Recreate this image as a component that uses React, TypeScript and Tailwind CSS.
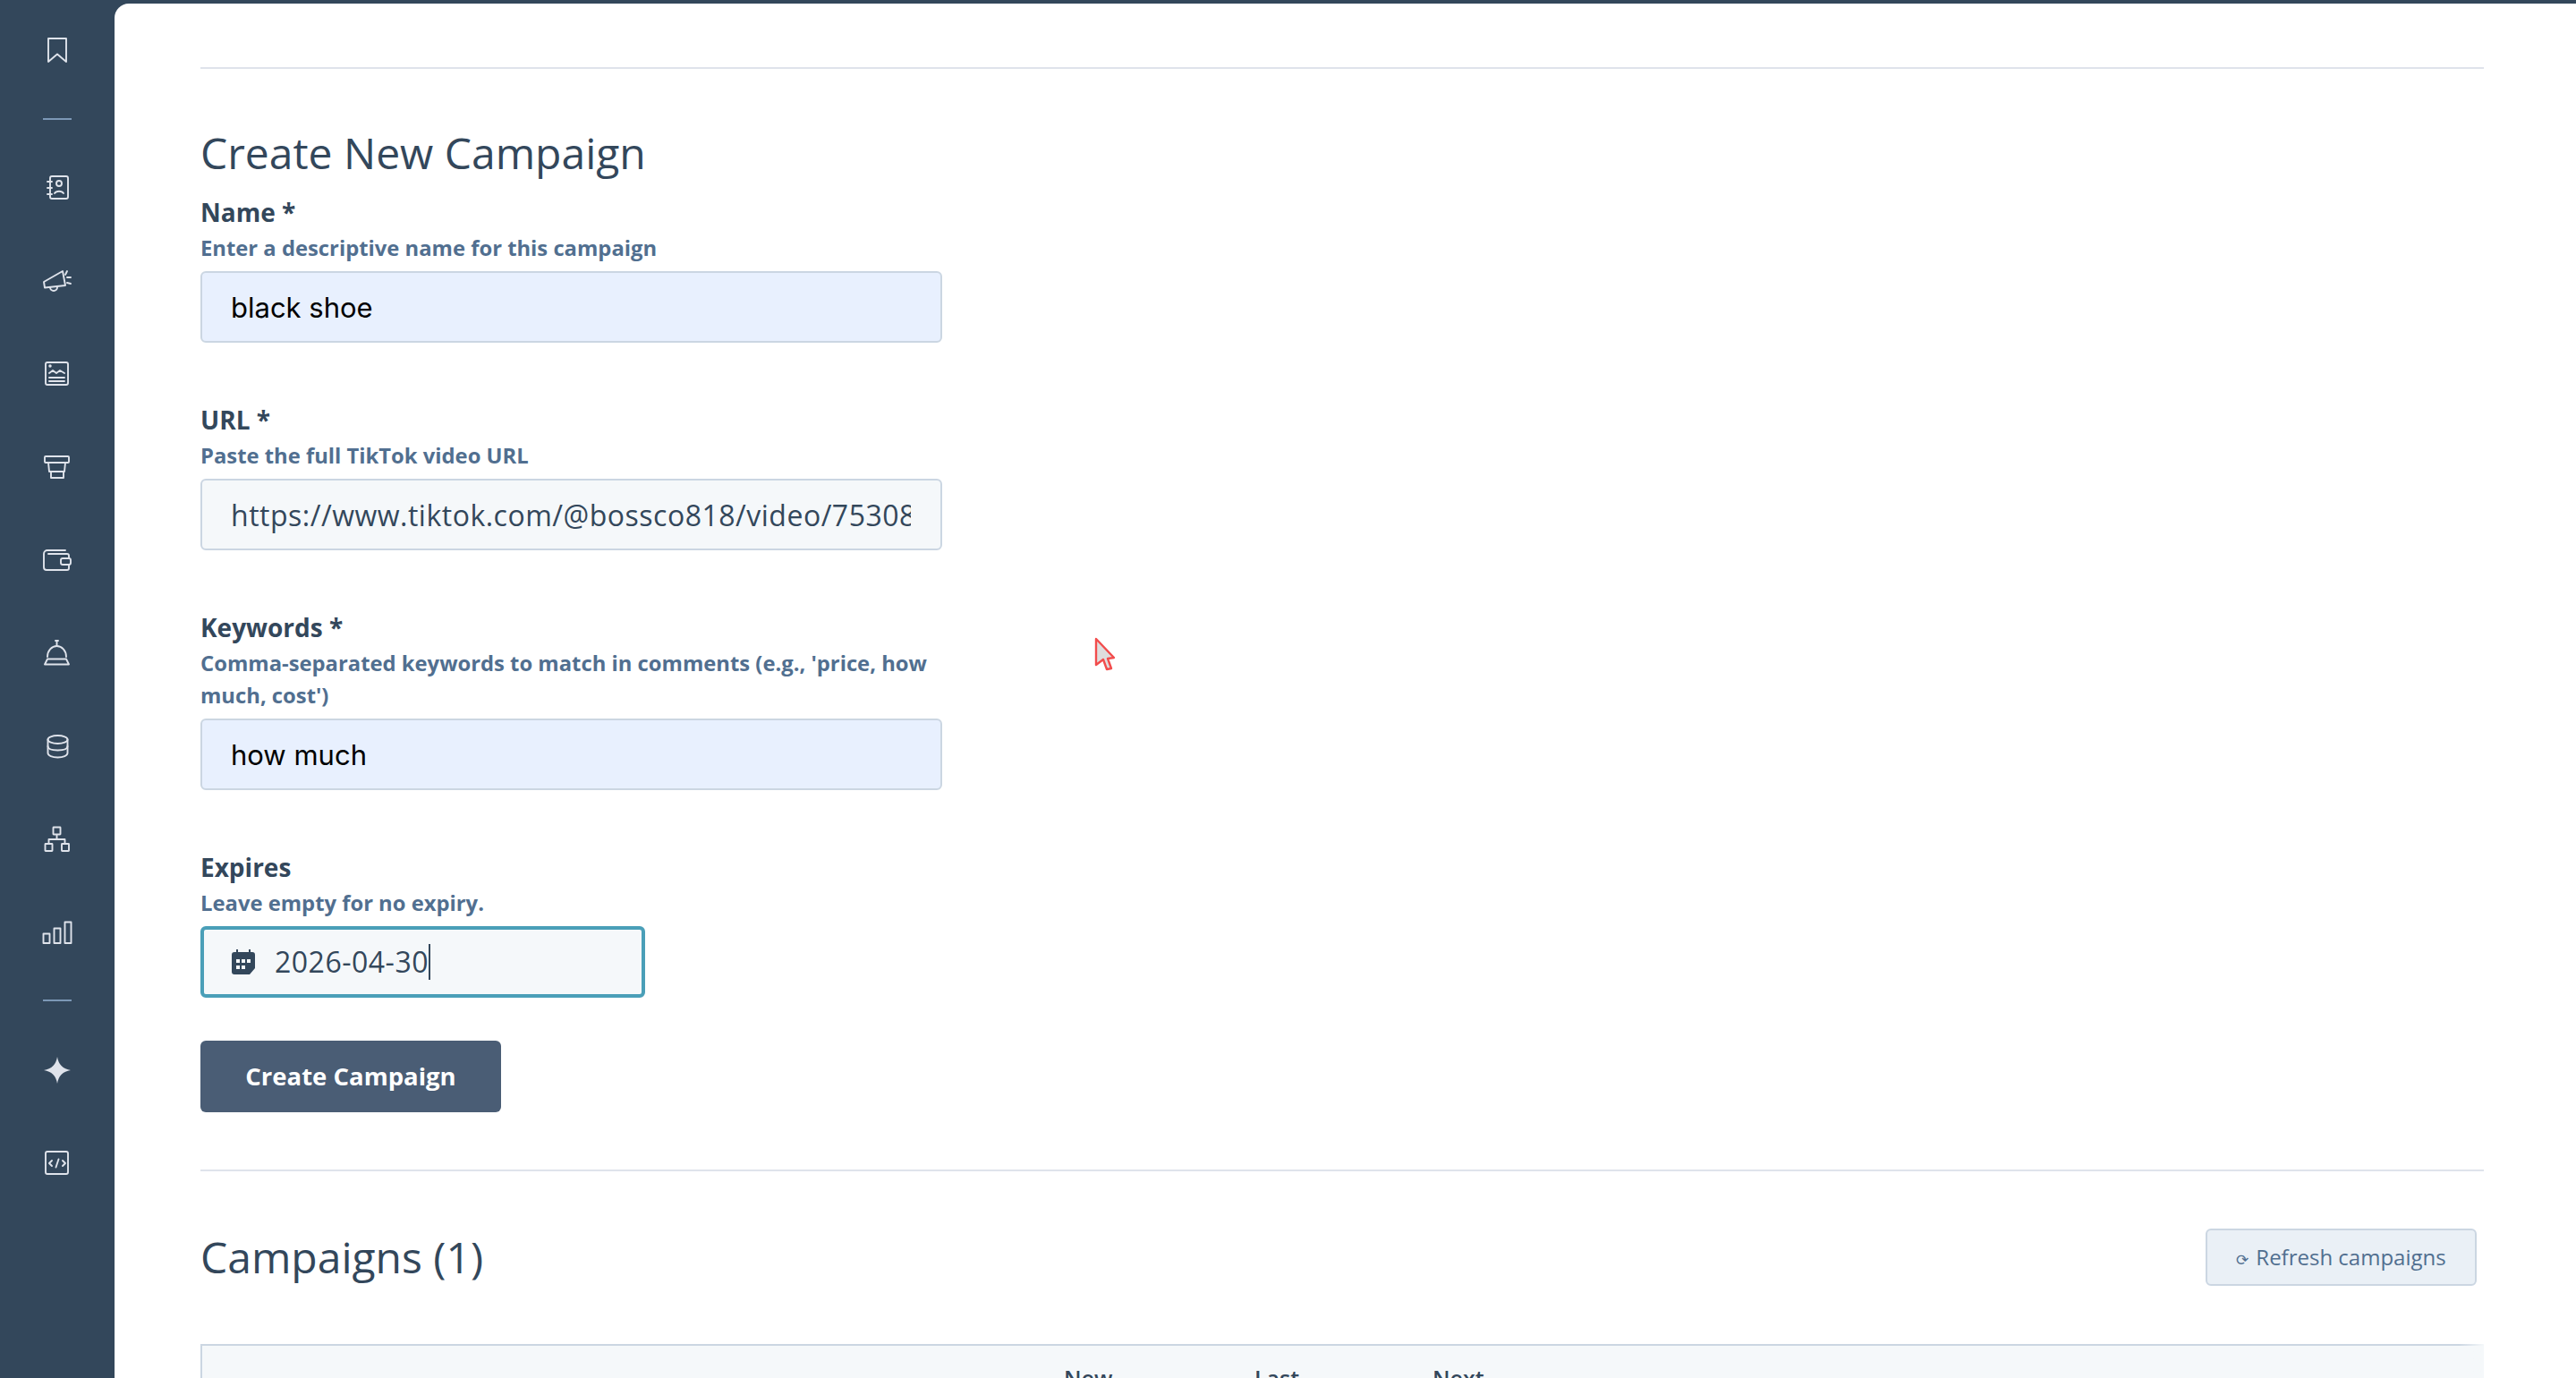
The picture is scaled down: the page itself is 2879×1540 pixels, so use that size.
import React from 'react';

const NavIcon: React.FC<{ children: React.ReactNode }> = ({ children }) => (
  <div className="h-[104px] w-full flex items-center justify-center shrink-0">
    <svg
      width="36"
      height="36"
      viewBox="0 0 36 36"
      fill="none"
      stroke="#dfe3eb"
      strokeWidth="1.9"
      strokeLinecap="round"
      strokeLinejoin="round"
    >
      {children}
    </svg>
  </div>
);

const NavDivider: React.FC<{ tall?: boolean }> = ({ tall }) => (
  <div className={tall ? 'h-[50px] w-full flex items-center justify-center shrink-0' : 'h-[49px] w-full flex items-center justify-center shrink-0'}>
    <div className="w-8 h-[2px] bg-[#7c98b6]"></div>
  </div>
);

const Sidebar: React.FC = () => (
  <aside className="w-[128px] shrink-0 flex flex-col bg-[#33475b]">
    <NavIcon>
      <path d="M8 5h20v26l-10-8.500L8 31z" />
    </NavIcon>
    <NavDivider />
    <NavIcon>
      <rect x="10" y="6" width="20" height="25" rx="2" />
      <path d="M7 12h5M7 19h5M7 26h5" />
      <circle cx="20" cy="14" r="3" />
      <path d="M15 25c2-3 8-3 10 0" />
    </NavIcon>
    <NavIcon>
      <path d="M3 20L24 8l3 16-23 2.500z" />
      <path d="M10 26a4 4 0 0 0 8 0" />
      <path d="M29 8l-2 4M29 15h4M29 21l4 1" />
    </NavIcon>
    <NavIcon>
      <rect x="5" y="6" width="25" height="25" rx="2" />
      <circle cx="10" cy="10" r="0.8" />
      <path d="M9 18l4-3 4 3 4-3 5 3" />
      <path d="M9 23h17M9 27h17" />
    </NavIcon>
    <NavIcon>
      <rect x="4" y="7" width="27" height="7" rx="1" />
      <path d="M8 14l1 10h17l1-10" />
      <path d="M11 24v7h14v-7" />
    </NavIcon>
    <NavIcon>
      <path d="M27 8H7a4 4 0 0 0-4 4v15a3 3 0 0 0 3 3h23a2 2 0 0 0 2-2v-4" />
      <path d="M31 17v-3a2 2 0 0 0-2-2H8" />
      <rect x="22" y="17" width="11" height="7" rx="2" />
    </NavIcon>
    <NavIcon>
      <path d="M16 5h3M17.500 5v5" />
      <path d="M7 23c0-7 5-12 10.500-12S28 16 28 23" />
      <path d="M7 25.500h21l3 6H4z" />
    </NavIcon>
    <NavIcon>
      <ellipse cx="18.500" cy="11.500" rx="11" ry="4.500" />
      <path d="M7.500 11.500v15c0 3 5 5 11 5s11-2 11-5v-15" />
      <path d="M7.500 19c0 3 5 4.500 11 4.500s11-1.500 11-4.500" />
    </NavIcon>
    <NavIcon>
      <rect x="13.500" y="5.500" width="8" height="8" rx="0.500" />
      <rect x="4.500" y="24" width="8" height="8" rx="0.500" />
      <rect x="23" y="24" width="8" height="8" rx="0.500" />
      <path d="M17.500 14v5M8.500 24v-5h18v5" />
    </NavIcon>
    <NavIcon>
      <rect x="2.500" y="20.500" width="7" height="10.500" />
      <rect x="14.500" y="14.500" width="7" height="16.500" />
      <rect x="26.500" y="7.500" width="7" height="23.500" />
    </NavIcon>
    <NavDivider tall />
    <NavIcon>
      <path d="M18 4Q20 17 33 19 20 21 18 34 16 21 3 19 16 17 18 4z" fill="#dfe3eb" stroke="none" />
    </NavIcon>
    <NavIcon>
      <rect x="5" y="6" width="25" height="25" rx="2" />
      <path d="M12 16l-3 3 3 3M24 16l3 3-3 3M19.500 14.500l-3 9" />
    </NavIcon>
  </aside>
);

const FieldLabel: React.FC<{ label: string; hint: string }> = ({ label, hint }) => (
  <>
    <div className="text-[28px] leading-[36px] font-bold text-[#33475b]">{label}</div>
    <div className="mt-1 mb-2 text-[23.800px] leading-[36px] font-bold text-[#516f90]">{hint}</div>
  </>
);

const TextField: React.FC<{ value: string; autofilled?: boolean }> = ({ value, autofilled }) => (
  <input
    readOnly
    value={value}
    className={
      autofilled
        ? "block w-[829px] h-[80px] px-[32px] rounded-[6px] border-2 border-[#cbd6e2] bg-[#e8f0fe] font-['Inter',sans-serif] text-[31px] text-black outline-none"
        : 'block w-[829px] h-[80px] pl-[32px] pr-[33px] rounded-[6px] border-2 border-[#cbd6e2] bg-[#f5f8fa] text-[32px] tracking-[0.5px] text-[#33475b] outline-none'
    }
  />
);

const CalendarIcon: React.FC = () => (
  <svg width="26" height="28" viewBox="0 0 26 28" className="shrink-0">
    <path
      d="M5 0h2v3h12V0h2v3h2a3 3 0 0 1 3 3v15l-6 7H3a3 3 0 0 1-3-3V6a3 3 0 0 1 3-3h2z"
      fill="#33475b"
    />
    <g fill="#f5f8fa">
      <rect x="5" y="11" width="4" height="4" />
      <rect x="11" y="11" width="4" height="4" />
      <rect x="17" y="11" width="4" height="4" />
      <rect x="5" y="18" width="4" height="4" />
      <rect x="11" y="18" width="4" height="4" />
    </g>
  </svg>
);

const App: React.FC = () => {
  return (
    <div className="relative flex h-[1540px] w-full overflow-hidden bg-[#33475b] font-['Open_Sans',sans-serif]">
      <div className="flex flex-col pt-1 w-[128px] shrink-0">
        <Sidebar />
      </div>
      <main className="mt-1 flex-1 min-w-0 rounded-tl-[16px] bg-white pl-[96px] pr-[103px] overflow-hidden">
        <div className="mt-[71px] h-[2px] bg-[#dfe3eb]"></div>

        <h2 className="mt-[64px] mb-[18px] text-[48px] leading-[60px] font-normal text-[#33475b]">
          Create New Campaign
        </h2>

        <FieldLabel label="Name *" hint="Enter a descriptive name for this campaign" />
        <TextField value="black shoe" autofilled />

        <div className="mt-[68px]">
          <FieldLabel label="URL *" hint="Paste the full TikTok video URL" />
          <TextField value="https://www.tiktok.com/@bossco818/video/7530812345678901234" />
        </div>

        <div className="mt-[68px] w-[829px]">
          <FieldLabel
            label="Keywords *"
            hint="Comma-separated keywords to match in comments (e.g., 'price, how much, cost')"
          />
          <TextField value="how much" autofilled />
        </div>

        <div className="mt-[68px]">
          <FieldLabel label="Expires" hint="Leave empty for no expiry." />
          <div className="flex items-center w-[497px] h-[80px] px-[31px] rounded-[6px] border-4 border-[#4a9fb8] bg-[#f5f8fa] text-[32px] tracking-[0.5px] text-[#33475b]">
            <CalendarIcon />
            <span className="ml-[22px]">2026-04-30</span>
            <span className="w-[2px] h-[40px] bg-[#33475b]"></span>
          </div>
        </div>

        <button className="mt-[48px] block w-[336px] h-[80px] rounded-[6px] bg-[#4a5d75] text-[27.500px] font-bold text-white">
          Create Campaign
        </button>

        <div className="mt-[64px] h-[2px] bg-[#dfe3eb]"></div>

        <div className="mt-[64px] flex items-center justify-between pr-[8px]">
          <h2 className="text-[48px] leading-[64px] font-normal text-[#33475b]">Campaigns (1)</h2>
          <button className="w-[303px] h-[64px] rounded-[6px] border-2 border-[#cbd6e2] bg-[#eaf0f6] text-[24px] text-[#516f90]">
            <span className="mr-[8px] text-[17px]">⟳</span>Refresh campaigns
          </button>
        </div>

        <div className="relative mt-[65px] h-[200px] border-t-2 border-l-2 border-[#cbd6e2] bg-[#f5f8fa]">
          <div className="flex pt-[20px] text-[25px] leading-[32px] font-semibold text-[#33475b]">
            <span className="ml-[963px] w-[213px]">New</span>
            <span className="w-[199px]">Last</span>
            <span>Next</span>
          </div>
          <div className="absolute -top-[2px] right-0 h-[calc(100%+2px)] w-[28px] bg-gradient-to-r from-transparent to-[#f5f8fa]"></div>
        </div>
      </main>

      {/* screen recording pointer */}
      <svg
        width="24"
        height="38"
        viewBox="0 0 24 38"
        className="absolute left-[1223px] top-[712px]"
      >
        <path
          d="M2 2l20 21-7 1 4 11-5 1-4-11-8 6z"
          fill="#dedede"
          stroke="#f24c4c"
          strokeWidth="2.400"
          strokeLinejoin="round"
        />
      </svg>
    </div>
  );
};

export default App;
